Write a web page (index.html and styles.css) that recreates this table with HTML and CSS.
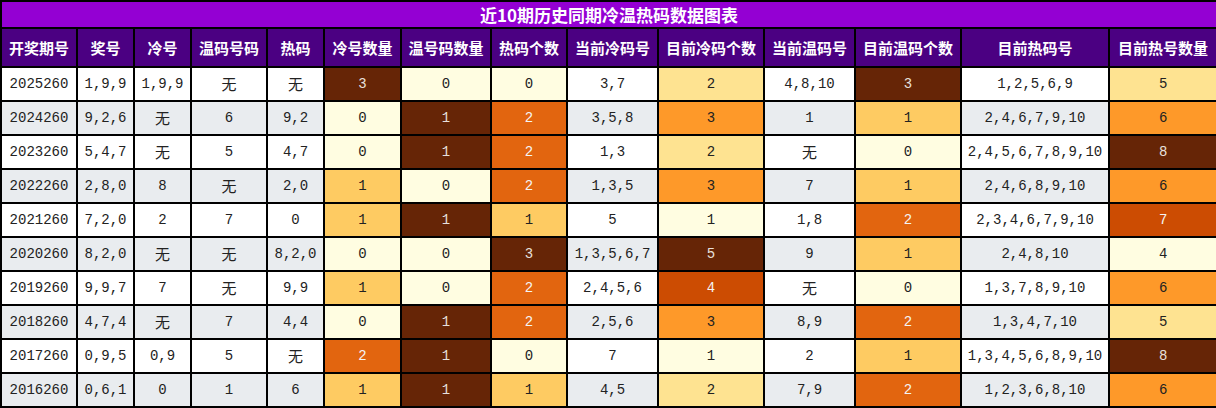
FILE: index.html
```html
<!DOCTYPE html>
<html lang="zh">
<head>
<meta charset="utf-8">
<title>近10期历史同期冷温热码数据图表</title>
<link rel="stylesheet" href="styles.css">
</head>
<body>
<table class="chart">
  <colgroup>
    <col class="w76"><col class="w57"><col class="w57"><col class="w76"><col class="w57"><col class="w77"><col class="w90"><col class="w76"><col class="w91"><col class="w106"><col class="w91"><col class="w106"><col class="w148"><col class="w108">
  </colgroup>
  <thead>
    <tr class="title-row"><th colspan="14">近10期历史同期冷温热码数据图表</th></tr>
    <tr class="head-row">
      <th>开奖期号</th><th>奖号</th><th>冷号</th><th>温码号码</th><th>热码</th><th>冷号数量</th><th>温号码数量</th><th>热码个数</th><th>当前冷码号</th><th>目前冷码个数</th><th>当前温码号</th><th>目前温码个数</th><th>目前热码号</th><th>目前热号数量</th>
    </tr>
  </thead>
  <tbody>
    <tr><td>2025260</td><td>1,9,9</td><td>1,9,9</td><td class="cjk">无</td><td class="cjk">无</td><td class="c-b">3</td><td class="c-ly">0</td><td class="c-ly">0</td><td>3,7</td><td class="c-g">2</td><td>4,8,10</td><td class="c-b">3</td><td>1,2,5,6,9</td><td class="c-g">5</td></tr>
    <tr><td>2024260</td><td>9,2,6</td><td class="cjk">无</td><td>6</td><td>9,2</td><td class="c-ly">0</td><td class="c-b">1</td><td class="c-do">2</td><td>3,5,8</td><td class="c-o">3</td><td>1</td><td class="c-y">1</td><td>2,4,6,7,9,10</td><td class="c-o">6</td></tr>
    <tr><td>2023260</td><td>5,4,7</td><td class="cjk">无</td><td>5</td><td>4,7</td><td class="c-ly">0</td><td class="c-b">1</td><td class="c-do">2</td><td>1,3</td><td class="c-g">2</td><td class="cjk">无</td><td class="c-ly">0</td><td>2,4,5,6,7,8,9,10</td><td class="c-b">8</td></tr>
    <tr><td>2022260</td><td>2,8,0</td><td>8</td><td class="cjk">无</td><td>2,0</td><td class="c-y">1</td><td class="c-ly">0</td><td class="c-do">2</td><td>1,3,5</td><td class="c-o">3</td><td>7</td><td class="c-y">1</td><td>2,4,6,8,9,10</td><td class="c-o">6</td></tr>
    <tr><td>2021260</td><td>7,2,0</td><td>2</td><td>7</td><td>0</td><td class="c-y">1</td><td class="c-b">1</td><td class="c-y">1</td><td>5</td><td class="c-ly">1</td><td>1,8</td><td class="c-do">2</td><td>2,3,4,6,7,9,10</td><td class="c-r">7</td></tr>
    <tr><td>2020260</td><td>8,2,0</td><td class="cjk">无</td><td class="cjk">无</td><td>8,2,0</td><td class="c-ly">0</td><td class="c-ly">0</td><td class="c-b">3</td><td>1,3,5,6,7</td><td class="c-b">5</td><td>9</td><td class="c-y">1</td><td>2,4,8,10</td><td class="c-ly">4</td></tr>
    <tr><td>2019260</td><td>9,9,7</td><td>7</td><td class="cjk">无</td><td>9,9</td><td class="c-y">1</td><td class="c-ly">0</td><td class="c-do">2</td><td>2,4,5,6</td><td class="c-r">4</td><td class="cjk">无</td><td class="c-ly">0</td><td>1,3,7,8,9,10</td><td class="c-o">6</td></tr>
    <tr><td>2018260</td><td>4,7,4</td><td class="cjk">无</td><td>7</td><td>4,4</td><td class="c-ly">0</td><td class="c-b">1</td><td class="c-do">2</td><td>2,5,6</td><td class="c-o">3</td><td>8,9</td><td class="c-do">2</td><td>1,3,4,7,10</td><td class="c-g">5</td></tr>
    <tr><td>2017260</td><td>0,9,5</td><td>0,9</td><td>5</td><td class="cjk">无</td><td class="c-do">2</td><td class="c-b">1</td><td class="c-ly">0</td><td>7</td><td class="c-ly">1</td><td>2</td><td class="c-y">1</td><td>1,3,4,5,6,8,9,10</td><td class="c-b">8</td></tr>
    <tr><td>2016260</td><td>0,6,1</td><td>0</td><td>1</td><td>6</td><td class="c-y">1</td><td class="c-b">1</td><td class="c-y">1</td><td>4,5</td><td class="c-g">2</td><td>7,9</td><td class="c-do">2</td><td>1,2,3,6,8,10</td><td class="c-o">6</td></tr>
  </tbody>
</table>
</body>
</html>
```

FILE: styles.css
```css
html, body {
  margin: 0;
  padding: 0;
  background: #ffffff;
}

.chart {
  width: 1216px;
  table-layout: fixed;
  border-collapse: collapse;
  font-family: "Liberation Mono", "DejaVu Sans Mono", monospace;
  font-size: 14px;
  color: #222222;
}

.w57 { width: 57px; }
.w76 { width: 76px; }
.w77 { width: 77px; }
.w90 { width: 90px; }
.w91 { width: 91px; }
.w106 { width: 106px; }
.w108 { width: 108px; }
.w148 { width: 148px; }

.chart th,
.chart td {
  border: 2px solid #000000;
  padding: 0;
  text-align: center;
  vertical-align: middle;
  white-space: nowrap;
  overflow: hidden;
}

.title-row th {
  height: 25px;
  background: #9400d3;
  color: #ffffff;
  font-family: "Noto Sans CJK SC", "Liberation Sans", sans-serif;
  font-size: 17px;
  font-weight: 700;
  line-height: 22px;
}

.head-row th {
  height: 37px;
  background: #4b0082;
  color: #ffffff;
  font-family: "Noto Sans CJK SC", "Liberation Sans", sans-serif;
  font-size: 15px;
  font-weight: 700;
  line-height: 20px;
}

.chart td {
  height: 32px;
  line-height: 20px;
  background: #ffffff;
}

.chart tbody tr:nth-child(even) td {
  background: #e9ecef;
}

.chart td.cjk {
  font-family: "Noto Sans CJK SC", sans-serif;
  font-size: 15px;
}

.chart tbody tr td.c-ly { background: #fffde1; color: #222222; }
.chart tbody tr td.c-g  { background: #fee391; color: #222222; }
.chart tbody tr td.c-y  { background: #fecb62; color: #222222; }
.chart tbody tr td.c-o  { background: #fe9929; color: #222222; }
.chart tbody tr td.c-do { background: #e2650f; color: #f4f4f4; }
.chart tbody tr td.c-r  { background: #cc4c02; color: #f4f4f4; }
.chart tbody tr td.c-b  { background: #662506; color: #e8e0dc; }
```
